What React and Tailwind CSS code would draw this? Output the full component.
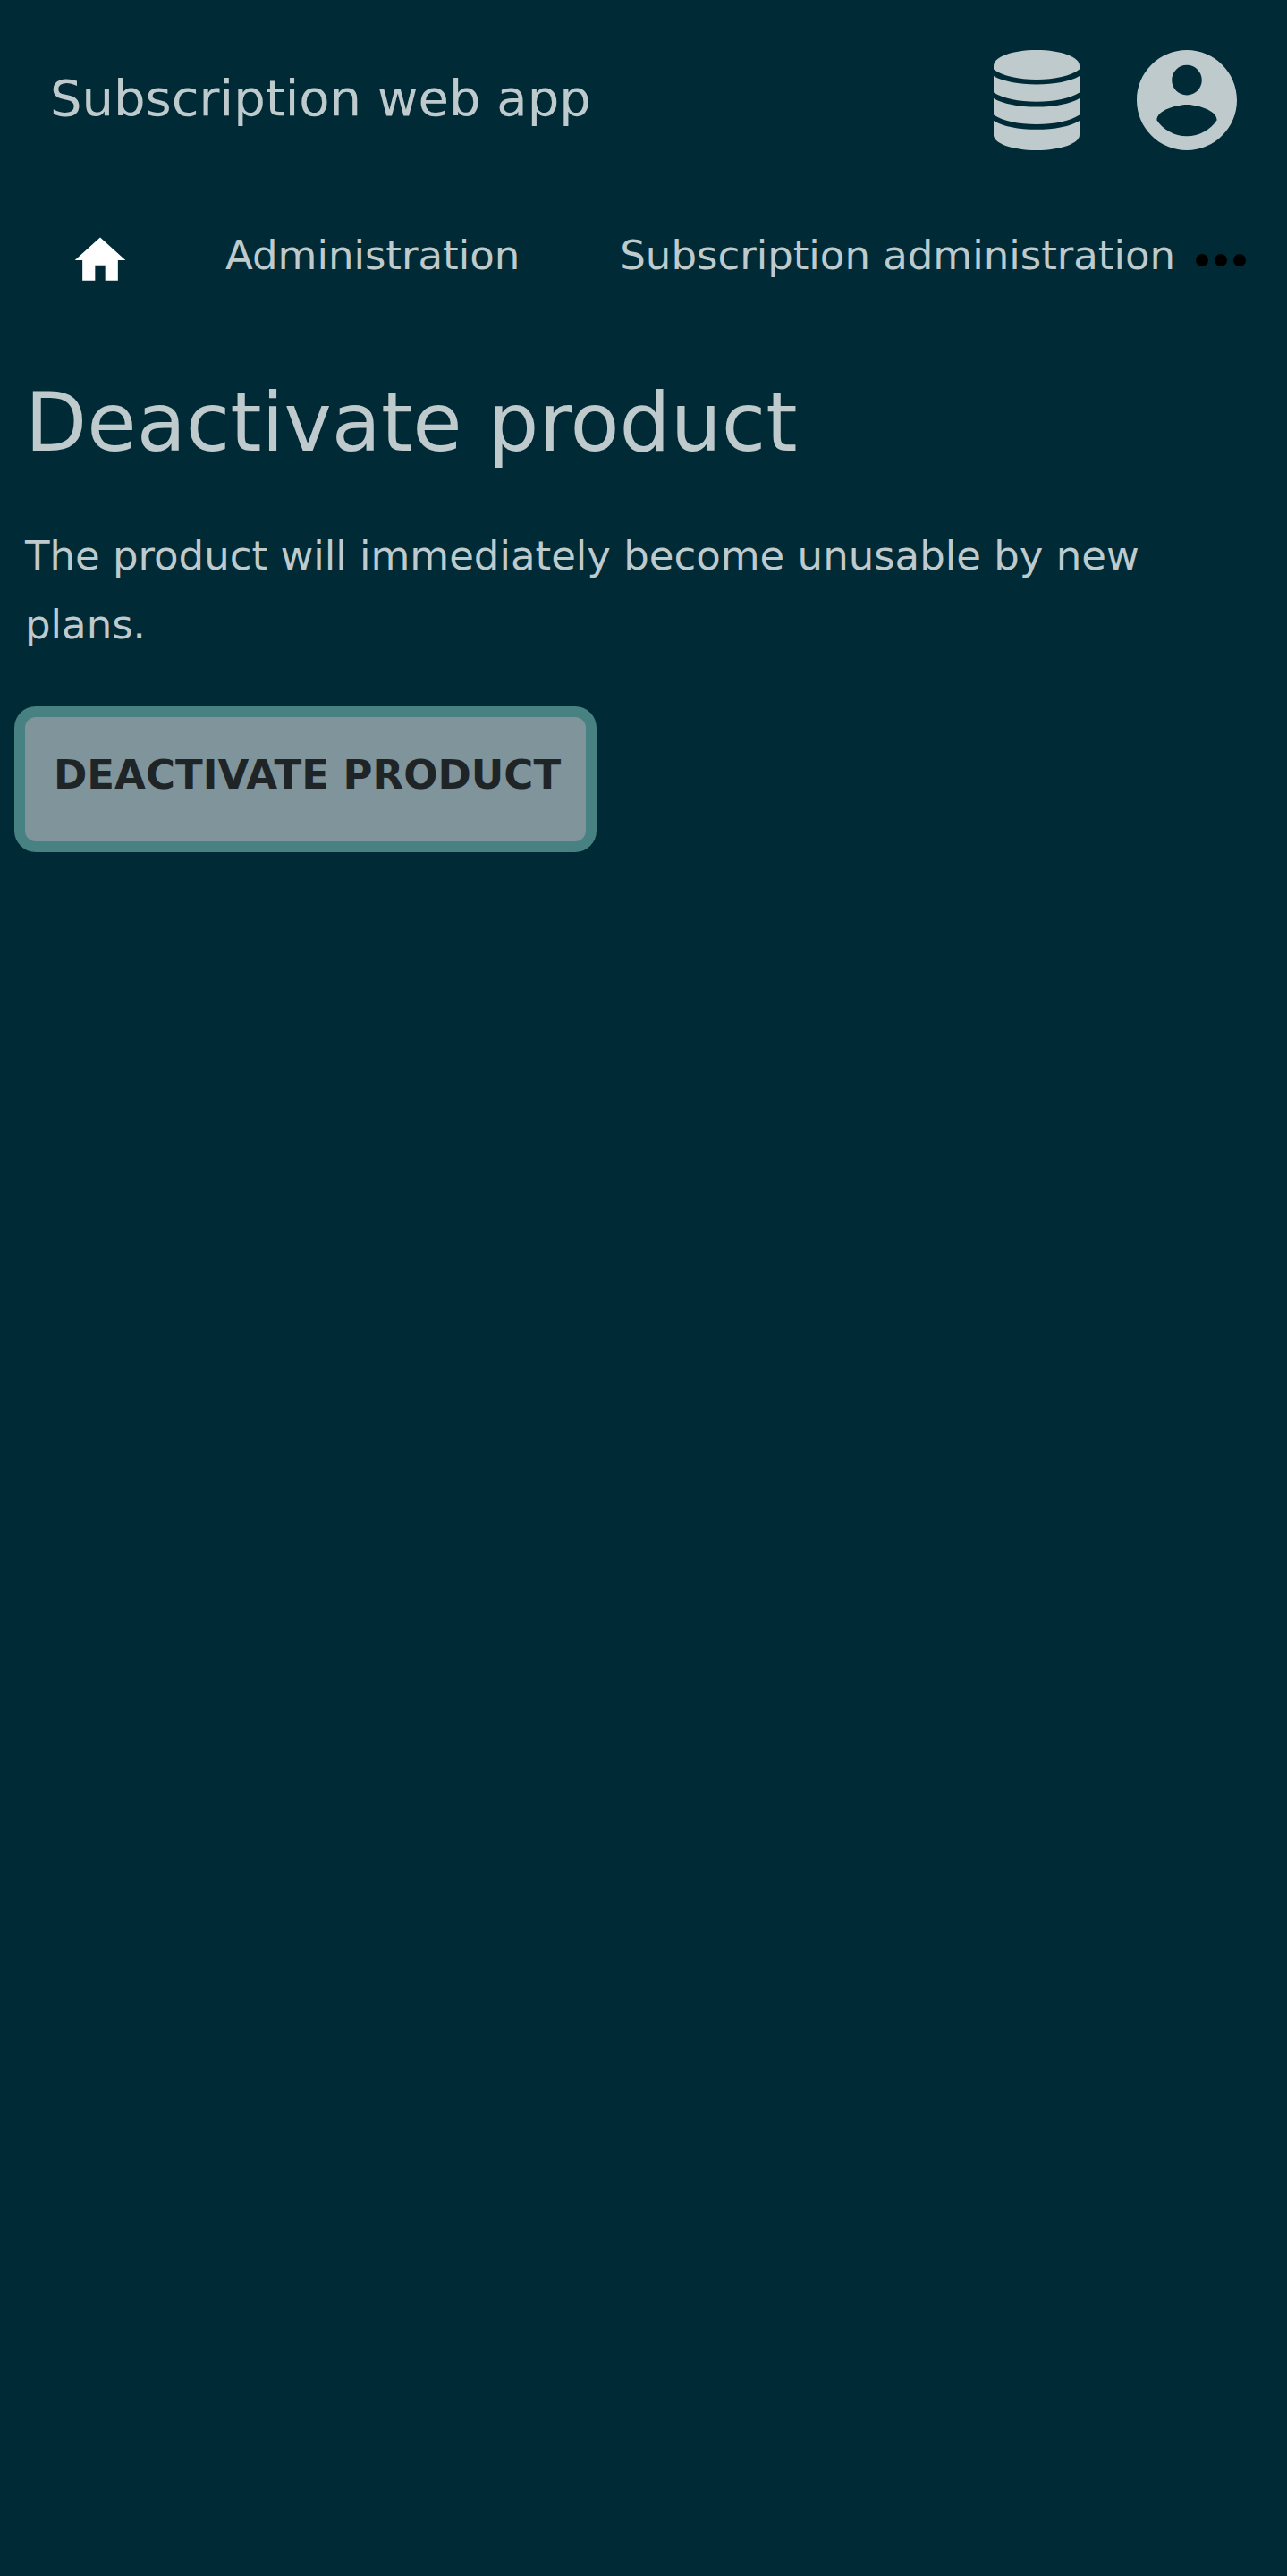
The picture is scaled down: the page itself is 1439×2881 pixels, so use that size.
import { MdHome } from "react-icons/md";

function DatabaseIcon() {
  return (
    <svg viewBox="0 0 96 112" className="h-28 w-24" fill="currentColor" aria-hidden="true">
      <path d="M0 17.5C0 8 20 0 48 0S96 8 96 17.5V21.5C86 29 68 33 48 33S10 29 0 21.5Z" />
      <path d="M0 29C10 35 28 38.4 48 38.4S86 35 96 29V47.5C86 54 68 57.8 48 57.8S10 54 0 47.5Z" />
      <path d="M0 54C10 60 28 63.6 48 63.6S86 60 96 54V72.5C86 79 68 83 48 83S10 79 0 72.5Z" />
      <path d="M0 79C10 85.5 28 88.8 48 88.8S86 85.5 96 79V95C96 104 76 112 48 112S0 104 0 95Z" />
    </svg>
  );
}

function AccountIcon() {
  return (
    <svg viewBox="2 2 20 20" className="size-28" fill="currentColor" aria-hidden="true">
      <path d="M12 2C6.48 2 2 6.48 2 12s4.48 10 10 10 10-4.48 10-10S17.52 2 12 2zm0 3c1.66 0 3 1.34 3 3s-1.34 3-3 3-3-1.34-3-3 1.34-3 3-3zm0 14.2c-2.5 0-4.71-1.28-6-3.22.03-1.99 4-3.08 6-3.08 1.99 0 5.97 1.09 6 3.08-1.29 1.94-3.5 3.22-6 3.22z" />
    </svg>
  );
}

function MoreIcon() {
  return (
    <svg viewBox="0 0 16 4" className="h-[14px] w-14" fill="currentColor" aria-hidden="true">
      <circle cx="2" cy="2" r="2" />
      <circle cx="8" cy="2" r="2" />
      <circle cx="14" cy="2" r="2" />
    </svg>
  );
}

export default function App() {
  return (
    <div className="min-h-screen bg-[#002b36] font-['DejaVu_Sans',sans-serif] text-[#bfcacd]">
      <header className="flex items-start justify-between p-14">
        <a href="#" className="text-[56px] leading-[108px]">Subscription web app</a>
        <div className="flex items-center gap-16">
          <a href="#" aria-label="Database"><DatabaseIcon /></a>
          <a href="#" aria-label="Account"><AccountIcon /></a>
        </div>
      </header>
      <nav className="flex items-center pt-[23px] pr-[46px] text-[45px] leading-[77px] whitespace-nowrap">
        <a href="#" aria-label="Home" className="mr-7 px-[78px] text-white"><MdHome className="size-[68px]" /></a>
        <a href="#" className="pb-[10px]">Administration</a>
        <a href="#" className="ml-28 pb-[10px]">Subscription administration</a>
        <button aria-label="More" className="ml-auto text-black"><MoreIcon /></button>
      </nav>
      <main className="px-7 pt-[85px]">
        <h1 className="text-[90px] leading-[108px]">Deactivate product</h1>
        <p className="mt-14 text-[45px] leading-[77px]">The product will immediately become unusable by new plans.</p>
        <button className="mt-[65px] rounded-xl bg-[#80949b] pt-[26px] pr-7 pb-9 pl-8 text-[45px] leading-[77px] font-bold text-[#1f2427] ring-[12px] ring-[#478182]">DEACTIVATE PRODUCT</button>
      </main>
    </div>
  );
}
